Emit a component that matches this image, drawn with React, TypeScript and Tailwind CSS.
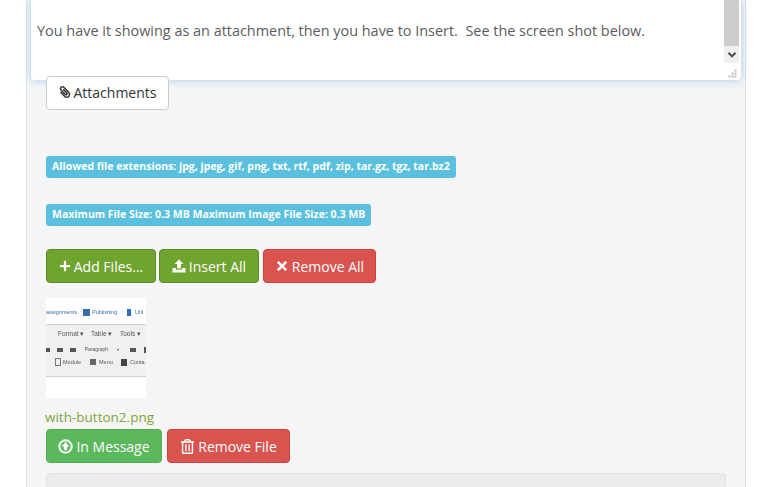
import { FaPaperclip, FaPlus, FaTimes, FaRegTrashAlt } from "react-icons/fa";
import type { ReactNode } from "react";

function Label({ children }: { children: ReactNode }) {
  return (
    <div className="w-fit h-[22px] px-[6px] rounded-[3px] bg-[#5bc0de] text-white text-[10.52px] font-bold leading-[20px] whitespace-nowrap">
      {children}
    </div>
  );
}

function Btn({
  color,
  width,
  icon,
  children,
}: {
  color: string;
  width: string;
  icon: ReactNode;
  children: ReactNode;
}) {
  return (
    <button className={`h-[34px] flex items-center justify-center gap-[3px] rounded-[4px] border text-white text-[14px] whitespace-nowrap ${color} ${width}`}>
      {icon}
      {children}
    </button>
  );
}

// upload glyph with the tray underneath
function UploadIcon() {
  return (
    <svg width="14" height="14" viewBox="0 0 14 14" fill="currentColor">
      <path d="M7 0.5 L11.5 5 L8.8 5 L8.8 9.5 L5.2 9.5 L5.2 5 L2.5 5 Z" />
      <path d="M0.5 9 L4 9 L4 10.8 L10 10.8 L10 9 L13.5 9 L13.5 13.5 L0.5 13.5 Z" />
    </svg>
  );
}

// outlined circle with an up arrow
function CircleUpIcon() {
  return (
    <svg width="15" height="15" viewBox="0 0 15 15" fill="none" stroke="currentColor">
      <circle cx="7.5" cy="7.5" r="6.2" strokeWidth="2" />
      <path d="M7.5 3.2 L11 7.2 L9 7.2 L9 11 L6 11 L6 7.2 L4 7.2 Z" fill="currentColor" strokeWidth="0.4" />
    </svg>
  );
}

function Thumbnail() {
  return (
    <div className="w-[100px] h-[100px] bg-white overflow-hidden font-['Liberation_Sans',sans-serif] text-[5.5px] text-[#555] whitespace-nowrap blur-[0.35px]">
      <div className="h-[26px] pt-[11px] flex items-start text-[#3b6ea5]">
        <span className="w-[37px] leading-[6px]">assignments</span>
        <span className="w-[7px] h-[7px] bg-[#3b6ea5]" />
        <span className="w-[37px] pl-[2px] leading-[6px]">Publishing</span>
        <span className="w-[4px] h-[7px] bg-[#2f6fc0]" />
        <span className="pl-[4px] leading-[6px]">Unl</span>
      </div>
      <div className="h-[53px] bg-[#f0f0f0] border-y border-[#d0d0d0]">
        <div className="flex pl-[12px] pt-[5px] h-[18px] text-[6.5px] leading-[8px]">
          <span className="w-[33px]">Format ▾</span>
          <span className="w-[29px]">Table ▾</span>
          <span>Tools ▾</span>
        </div>
        <div className="flex items-center h-[13px] text-[5px]">
          <span className="w-[4px] h-[4px] bg-[#555]" />
          <span className="ml-[7px] w-[6px] h-[4px] bg-[#555]" />
          <span className="ml-[7px] w-[6px] h-[4px] bg-[#555]" />
          <span className="ml-[9px] w-[33px]">Paragraph</span>
          <span className="text-[4px]">▾</span>
          <span className="ml-[11px] w-[6px] h-[4px] bg-[#555]" />
          <span className="ml-[8px] w-[2px] h-[6px] bg-[#555]" />
        </div>
        <div className="flex items-center h-[12px] pl-[9px]">
          <span className="w-[6px] h-[8px] border border-[#777]" />
          <span className="ml-[2px] w-[27px]">Module</span>
          <span className="w-[6px] h-[6px] bg-[#666]" />
          <span className="ml-[3px] w-[22px]">Menu</span>
          <span className="w-[6px] h-[7px] bg-[#444]" />
          <span className="ml-[3px]">Conta</span>
        </div>
      </div>
    </div>
  );
}

export default function App() {
  return (
    <div className="w-[772px] h-[487px] overflow-hidden bg-white px-[26px] font-['Open_Sans',sans-serif]">
      <div className="w-[720px] h-full border-x border-[#e3e3e3] bg-[#f5f5f5] px-[4px]">
        {/* editor box, top is scrolled off */}
        <div className="relative h-[80px] rounded-b-[4px] bg-white shadow-[0_0_8px_rgba(102,175,233,0.6)] px-[6px] pt-[21px] text-[14.43px] leading-[20px] text-[#5c5c5c] whitespace-pre">
          You have it showing as an attachment, then you have to Insert.  See the screen shot below.
          <div className="absolute right-[2px] top-0 w-[15px] h-[63px] bg-[#f0f0f0]">
            <div className="h-[46px] bg-[#cdcdcd]" />
            <svg className="mx-auto mt-[6px]" width="8" height="6" viewBox="0 0 8 6" fill="none" stroke="#505050" strokeWidth="2">
              <path d="M0.5 0.8 L4 4.3 L7.5 0.8" />
            </svg>
          </div>
          <svg className="absolute right-[4px] bottom-[2px]" width="9" height="9" viewBox="0 0 9 9" fill="#bbb">
            <rect x="6.5" y="0.5" width="2" height="2" />
            <rect x="3.5" y="3.5" width="2" height="2" />
            <rect x="6.5" y="3.5" width="2" height="2" />
            <rect x="0.5" y="6.5" width="2" height="2" />
            <rect x="3.5" y="6.5" width="2" height="2" />
            <rect x="6.5" y="6.5" width="2" height="2" />
          </svg>
        </div>

        <div className="pl-[15px]">
          <button className="-mt-[4px] relative w-[123px] h-[34px] pb-[2px] flex items-center justify-center gap-[3px] rounded-[4px] border border-[#ccc] bg-white text-[14px] text-[#333]">
            <FaPaperclip className="text-[12px] -scale-x-100" />
            Attachments
          </button>

          <div className="mt-[46px]">
            <Label>Allowed file extensions: jpg, jpeg, gif, png, txt, rtf, pdf, zip, tar.gz, tgz, tar.bz2</Label>
          </div>
          <div className="mt-[26px]">
            <Label>Maximum File Size: 0.3 MB Maximum Image File Size: 0.3 MB</Label>
          </div>

          <div className="mt-[23px] flex gap-[3px]">
            <Btn color="bg-[#6fa42f] border-[#5d8a27]" width="w-[110px]" icon={<FaPlus className="text-[12px]" />}>
              Add Files...
            </Btn>
            <Btn color="bg-[#6fa42f] border-[#5d8a27]" width="w-[100px]" icon={<UploadIcon />}>
              Insert All
            </Btn>
            <Btn color="ml-[1px] bg-[#d9534f] border-[#d43f3a]" width="w-[113px]" icon={<FaTimes className="text-[14px]" />}>
              Remove All
            </Btn>
          </div>

          <div className="mt-[15px]">
            <Thumbnail />
          </div>

          <div className="mt-[9px] h-[20px] -ml-px text-[13.5px] leading-[20px] text-[#7aa63c]">with-button2.png</div>

          <div className="mt-[2px] flex gap-[5px]">
            <Btn color="bg-[#5cb85c] border-[#4cae4c]" width="w-[116px]" icon={<CircleUpIcon />}>
              In Message
            </Btn>
            <Btn color="bg-[#d9534f] border-[#d43f3a]" width="w-[123px]" icon={<FaRegTrashAlt className="text-[15px]" />}>
              Remove File
            </Btn>
          </div>

          <div className="mt-[10px] w-[680px] h-[40px] rounded-[4px] border border-[#e3e3e3] bg-[#ececec]" />
        </div>
      </div>
    </div>
  );
}
